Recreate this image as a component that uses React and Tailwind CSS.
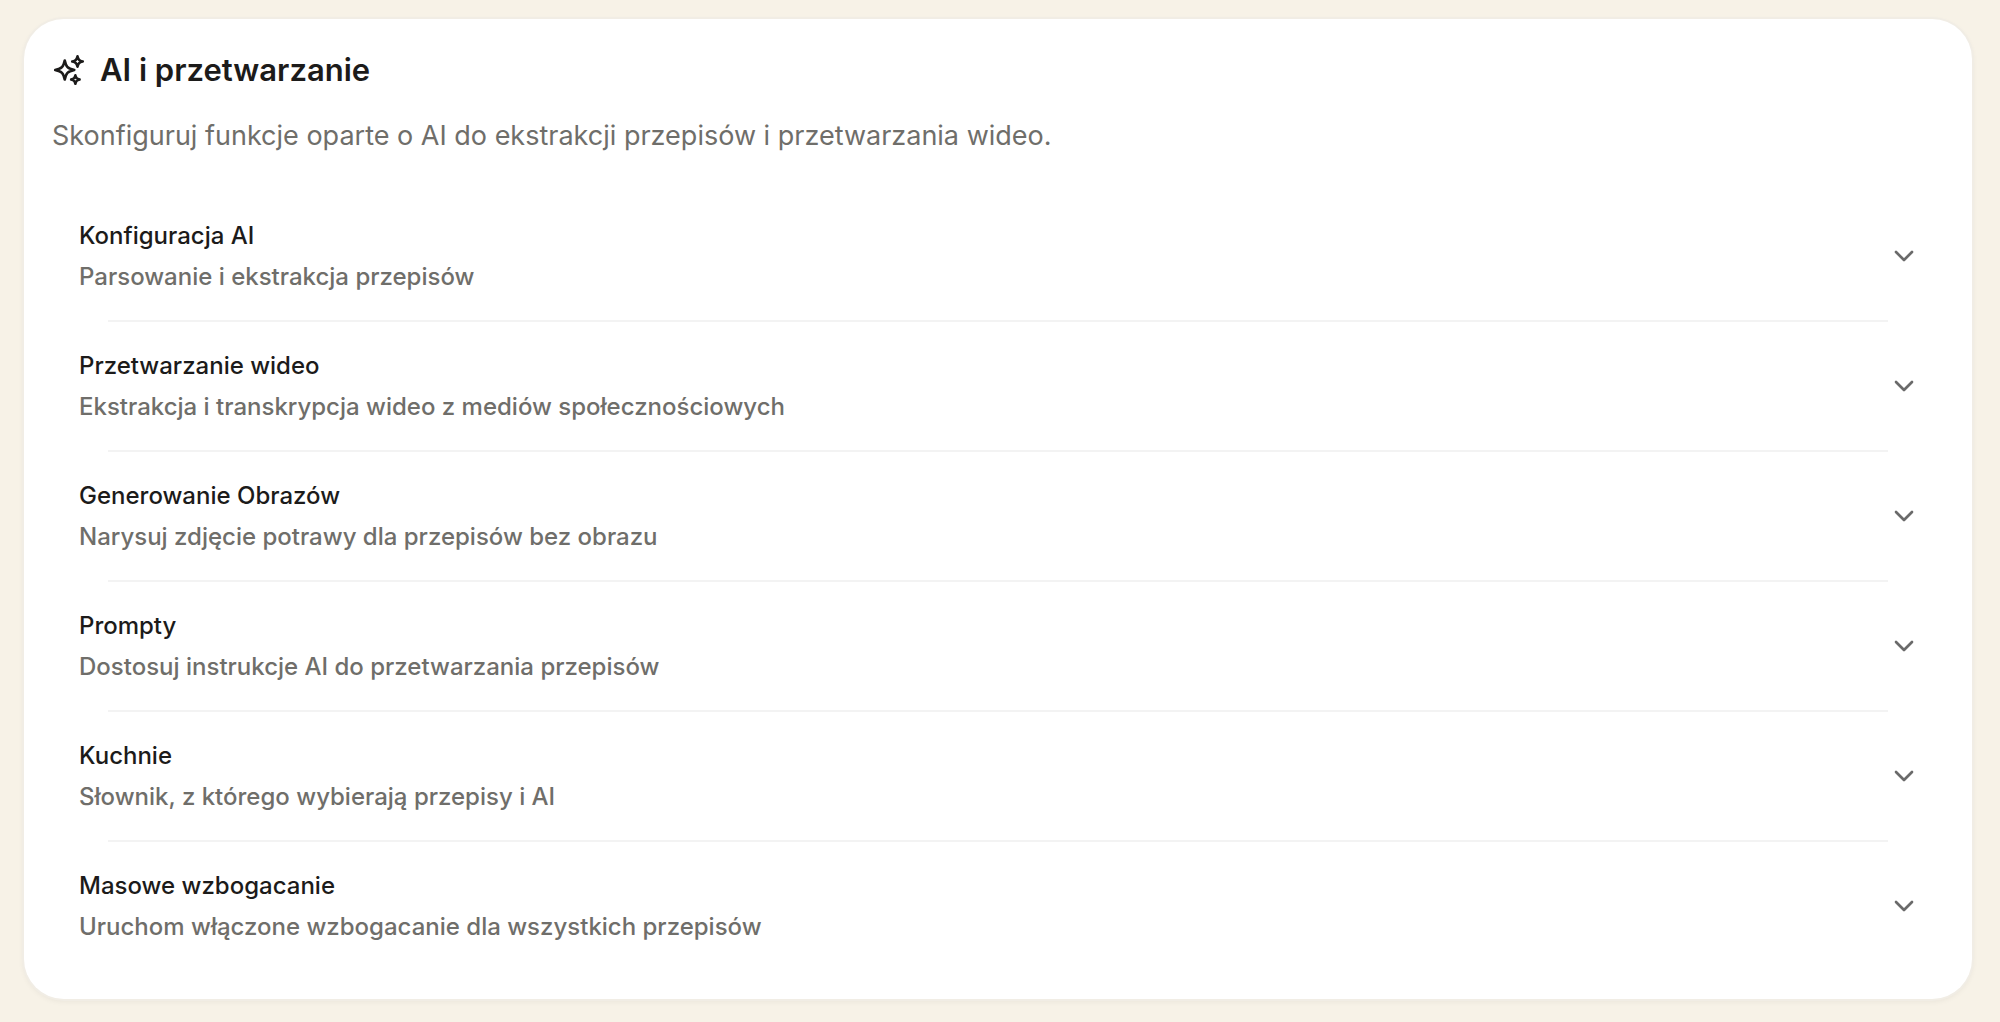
import React from 'react';

const sections = [
  { id: 'ai', title: 'Konfiguracja AI', subtitle: 'Parsowanie i ekstrakcja przepisów' },
  { id: 'video', title: 'Przetwarzanie wideo', subtitle: 'Ekstrakcja i transkrypcja wideo z mediów społecznościowych' },
  { id: 'images', title: 'Generowanie Obrazów', subtitle: 'Narysuj zdjęcie potrawy dla przepisów bez obrazu' },
  { id: 'prompts', title: 'Prompty', subtitle: 'Dostosuj instrukcje AI do przetwarzania przepisów' },
  { id: 'cuisines', title: 'Kuchnie', subtitle: 'Słownik, z którego wybierają przepisy i AI' },
  { id: 'bulk', title: 'Masowe wzbogacanie', subtitle: 'Uruchom włączone wzbogacanie dla wszystkich przepisów' }
];

// Heroicons "sparkles" outline
const SparklesIcon = () => (
  <svg className="w-[34px] h-[34px] shrink-0" fill="none" stroke="currentColor" strokeWidth="1.8" viewBox="0 0 24 24" aria-hidden="true">
    <path strokeLinecap="round" strokeLinejoin="round" d="M9.813 15.904 9 18.75l-.813-2.846a4.5 4.5 0 0 0-3.09-3.09L2.25 12l2.846-.813a4.5 4.5 0 0 0 3.09-3.09L9 5.25l.813 2.846a4.5 4.5 0 0 0 3.09 3.09L15.75 12l-2.846.813a4.5 4.5 0 0 0-3.09 3.09ZM18.259 8.715 18 9.75l-.259-1.035a3.375 3.375 0 0 0-2.455-2.456L14.25 6l1.036-.259a3.375 3.375 0 0 0 2.455-2.456L18 2.25l.259 1.035a3.375 3.375 0 0 0 2.456 2.456L21.75 6l-1.035.259a3.375 3.375 0 0 0-2.456 2.456ZM16.894 20.567 16.5 21.75l-.394-1.183a2.25 2.25 0 0 0-1.423-1.423L13.5 18.75l1.183-.394a2.25 2.25 0 0 0 1.423-1.423l.394-1.183.394 1.183a2.25 2.25 0 0 0 1.423 1.423l1.183.394-1.183.394a2.25 2.25 0 0 0-1.423 1.423Z" />
  </svg>
);

const ChevronIcon = () => (
  <svg className="w-8 h-8 shrink-0 text-[#6a6a6a]" fill="none" stroke="currentColor" strokeWidth="2" viewBox="0 0 24 24" aria-hidden="true">
    <path strokeLinecap="round" strokeLinejoin="round" d="m18 9-6 6-6-6" />
  </svg>
);

const SettingsRow = ({ section }) => (
  <button type="button" className="w-full flex items-center justify-between pl-[27px] pr-6 py-[23px] text-left">
    <span className="flex flex-col font-medium">
      <span className="text-2xl leading-[41px] text-[#1c1b1a]">{section.title}</span>
      <span className="text-2xl leading-[41px] text-[#6f6e6a]">{section.subtitle}</span>
    </span>
    <ChevronIcon />
  </button>
);

export default function App() {
  return (
    <div className="min-h-screen bg-[#f7f2e7] pt-[19px] pb-6 pl-6 pr-7 font-['Inter',sans-serif]">
      <section className="bg-white rounded-[40px] px-7 pt-[31px] pb-[29px] shadow-[0_0_0_2px_#f1ede5,0_2px_6px_#00000012]">
        <h2 className="flex items-center gap-[14px] text-[31px] leading-10 font-semibold text-[#1c1b1a]">
          <SparklesIcon />
          AI i przetwarzanie
        </h2>
        <p className="mt-[26px] text-[27px] leading-10 text-[#6f6e6a]">
          Skonfiguruj funkcje oparte o AI do ekstrakcji przepisów i przetwarzania wideo.
        </p>
        <div className="mt-9">
          {sections.map((section, index) => (
            <div key={section.id}>
              {index > 0 && <hr className="mx-14 border-t-2 border-[#f3f3f3]" />}
              <SettingsRow section={section} />
            </div>
          ))}
        </div>
      </section>
    </div>
  );
}
